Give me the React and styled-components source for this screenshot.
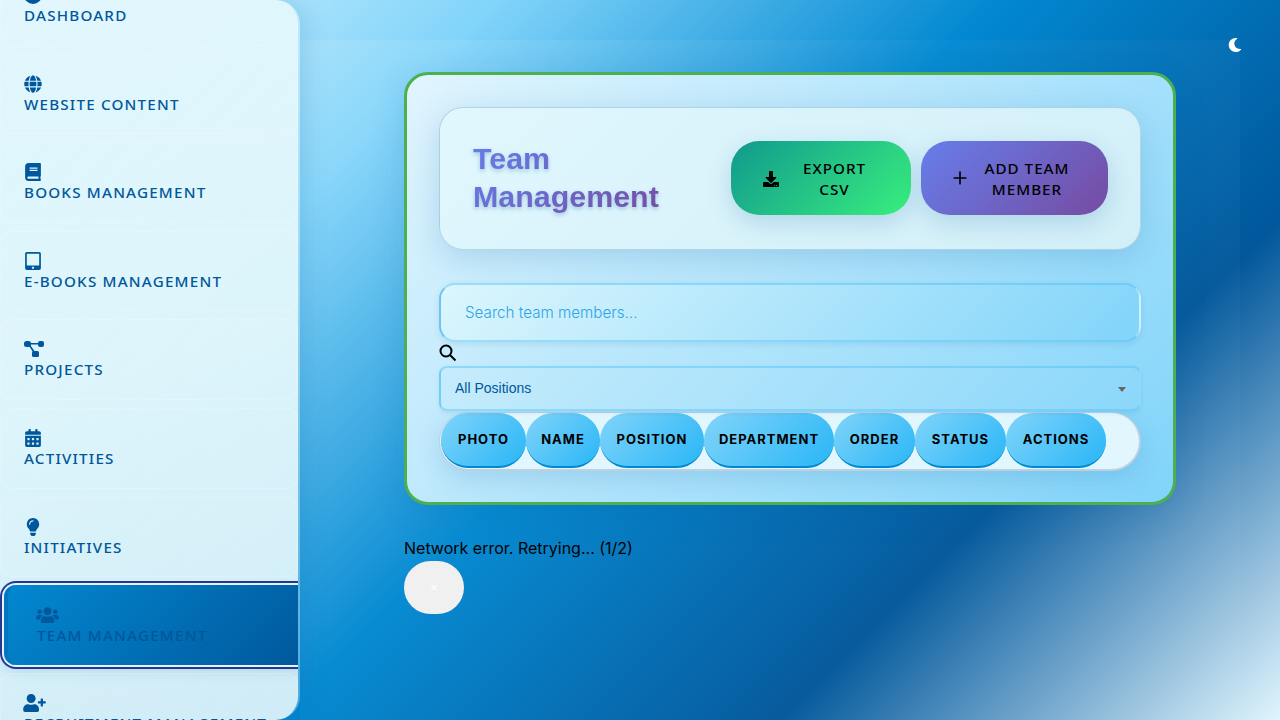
import styled, { createGlobalStyle } from "styled-components";
import {
	FaBook,
	FaCalendarAlt,
	FaDownload,
	FaGlobe,
	FaLightbulb,
	FaMoon,
	FaTabletAlt,
	FaUserPlus,
	FaUsers,
} from "react-icons/fa";
import { Plus } from "lucide-react";

const GlobalStyle = createGlobalStyle`
	html, body {
		margin: 0;
		height: 720px;
		overflow: hidden;
	}

	* {
		box-sizing: border-box;
	}

	body {
		font-family: "Liberation Sans", Arial, sans-serif;
		background: linear-gradient(135deg, #e1f5fe 0%, #81d4fa 25%, #0288d1 50%, #01579b 75%, #e1f5fe 100%);
	}
`;

const Layout = styled.div`
	position: relative;
	display: flex;
	height: 720px;
`;

const Sidebar = styled.aside`
	flex: 0 0 300px;
	height: 720px;
	overflow: hidden;
	background: linear-gradient(160deg, #e0f7fd 0%, #dcf5fb 50%, #cfecf7 100%);
	background-clip: padding-box;
	border-right: 2px solid rgba(255, 255, 255, 0.3);
	border-radius: 0 24px 24px 0;
	box-shadow: 4px 0 24px rgba(1, 87, 155, 0.18);
	position: relative;
	z-index: 1;
`;

/* list is scrolled a bit, first item sits partly above the fold */
const NavList = styled.nav`
	display: flex;
	flex-direction: column;
	gap: 8px;
	margin-top: -35px;
`;

const NavItem = styled.a`
	display: flex;
	flex-direction: column;
	align-items: flex-start;
	height: 80.6px;
	padding: 20px 23px 0;
	border: 1px solid rgba(255, 255, 255, 0.18);
	border-radius: 12px;
	background: linear-gradient(135deg, rgba(255, 255, 255, 0.06), rgba(255, 255, 255, 0.02));
	color: #01579b;
	font-family: "Noto Sans", sans-serif;
	font-size: 15.2px;
	font-weight: 500;
	letter-spacing: 1.2px;
	line-height: 22px;
	white-space: nowrap;
`;

const ActiveNavItem = styled(NavItem)`
	height: 79.4px;
	margin-left: 4px;
	margin-right: -12px;
	padding-top: 21px;
	padding-left: 29px;
	border: 0;
	border-left: 4px solid #0277bd;
	background: linear-gradient(135deg, #0288d1, #01579b);
	box-shadow: 0 0 0 2px #e1f5fe, 0 0 0 4px #283593, 0 6px 14px rgba(1, 87, 155, 0.15);
`;

const NavIconBox = styled.span`
	display: block;
	height: 18px;
	margin-left: ${(props) => (props.$wide ? "-1px" : "0")};

	svg {
		display: block;
		width: ${(props) => (props.$wide ? "23px" : "18px")};
		height: 18px;
	}
`;

const Main = styled.main`
	flex: 1;
	min-width: 0;
	padding: 40px 40px 0 0;
`;

const Surface = styled.div`
	height: 680px;
	padding: 32px 64px 0 104px;
	background: linear-gradient(135deg, rgba(255, 255, 255, 0.09), rgba(255, 255, 255, 0.025) 40%, rgba(255, 255, 255, 0.025));
`;

const Card = styled.section`
	width: 772px;
	height: 433px;
	padding: 32px;
	border: 3px solid #4caf50;
	border-radius: 24px;
	background: linear-gradient(135deg, #e1f5fe 0%, #81d4fa 100%);
	box-shadow: 0 8px 32px rgba(1, 87, 155, 0.15);
`;

const PageHeader = styled.header`
	display: flex;
	align-items: center;
	justify-content: space-between;
	height: 143px;
	padding: 0 32px 2px 33px;
	margin-bottom: 33px;
	border: 1px solid rgba(1, 87, 155, 0.2);
	border-radius: 24px;
	background: linear-gradient(135deg, #e0f7fd, #d2eff8);
	box-shadow: 0 8px 32px rgba(1, 87, 155, 0.18);
`;

const Title = styled.h1`
	margin: -2px 0 0;
	width: 200px;
	font-family: "Liberation Sans", Arial, sans-serif;
	font-size: 30.4px;
	font-weight: 700;
	line-height: 38px;
	background: linear-gradient(135deg, #667eea, #764ba2);
	-webkit-background-clip: text;
	background-clip: text;
	color: transparent;
	filter: drop-shadow(0 2px 2px rgba(1, 87, 155, 0.3));
`;

const Actions = styled.div`
	display: flex;
	gap: 10px;
`;

const ActionButton = styled.button`
	display: flex;
	align-items: center;
	gap: 11px;
	width: ${(props) => props.$width}px;
	height: 74px;
	padding: 2px 32px 0;
	border: 0;
	border-radius: 28px;
	background: ${(props) => props.$bg};
	box-shadow: 0 8px 24px rgba(1, 87, 155, 0.18);
	color: #000;
	font-family: "Noto Sans", sans-serif;
	font-size: 15.2px;
	font-weight: 500;
	letter-spacing: 1px;
	line-height: 21px;
	text-align: center;

	svg {
		flex: none;
	}
`;

const ButtonLabel = styled.span`
	flex: 1;
`;

const PlusIcon = styled(Plus)`
	margin: -2px -3px 0;
`;

const SearchInput = styled.input`
	display: block;
	width: 702px;
	height: 59px;
	padding: 0 24px;
	border: 2px solid rgba(79, 195, 247, 0.45);
	border-left-color: #6cc5f2;
	border-right-color: rgba(200, 235, 250, 0.4);
	border-radius: 16px;
	outline: 0;
	background: linear-gradient(135deg, #dcf6fd 0%, #81d4fa 100%);
	box-shadow: 0 2px 6px rgba(1, 87, 155, 0.12);
	font-family: Inter, sans-serif;
	font-size: 15.2px;
	font-weight: 300;
	color: #01579b;

	&::placeholder {
		color: #2ba4ea;
		opacity: 1;
	}
`;

const SearchIcon = styled.svg`
	display: block;
	width: 18px;
	height: 18px;
	margin: 2px 0 4px;
`;

const SelectWrap = styled.div`
	position: relative;
	width: 702px;

	&::after {
		content: "";
		position: absolute;
		top: 21px;
		right: 15px;
		border-style: solid;
		border-width: 5px 4px 0;
		border-color: #666 transparent transparent;
	}
`;

const PositionSelect = styled.select`
	display: block;
	width: 702px;
	height: 45px;
	padding: 0 14px 2px;
	border: 2px solid rgba(79, 195, 247, 0.45);
	border-radius: 8px;
	outline: 0;
	appearance: none;
	background: linear-gradient(135deg, #c6ecfc 0%, #8bd7fa 100%);
	box-shadow: 0 2px 4px rgba(1, 87, 155, 0.1);
	font-family: "Liberation Sans", Arial, sans-serif;
	font-size: 14px;
	color: #01579b;
`;

const TableHead = styled.div`
	display: flex;
	width: 702px;
	height: 59px;
	margin-top: 1px;
	padding: 1px 0 0 1px;
	border: 2px solid rgba(190, 205, 225, 0.95);
	border-left-width: 1px;
	border-top-width: 1px;
	border-radius: 30px;
	background: #e1f7fd;
	box-shadow: 0 8px 24px rgba(1, 87, 155, 0.15);
`;

const HeadCell = styled.div`
	display: flex;
	align-items: center;
	justify-content: center;
	flex: 0 0 ${(props) => props.$width}px;
	height: 55px;
	margin-top: -1px;
	padding-bottom: 2px;
	border-bottom: 2px solid #0288d1;
	border-radius: 27px;
	background: linear-gradient(135deg, #81d4fa, #29b6f6);
	color: #000;
	font-family: Inter, sans-serif;
	font-size: 13px;
	font-weight: 700;
	letter-spacing: 1px;
`;

const ErrorBlock = styled.div`
	margin-top: 31px;
`;

const ErrorText = styled.p`
	margin: 0 0 1px;
	color: #000;
	font-family: Inter, sans-serif;
	font-size: 16px;
	line-height: 24px;
`;

const DismissButton = styled.button`
	display: block;
	width: 60px;
	height: 53px;
	padding: 0;
	border: 0;
	border-radius: 27px;
	background: #f0f0f0;
	color: #fff;
	font-family: "Liberation Sans", Arial, sans-serif;
	font-size: 13px;
	line-height: 53px;
`;

const ThemeToggle = styled.button`
	position: absolute;
	top: 38px;
	right: 38px;
	display: flex;
	padding: 0;
	border: 0;
	background: none;
	color: #fff;
	font-size: 14px;
`;

function DashboardIcon() {
	return (
		<svg viewBox="0 0 18 18" fill="#01579b">
			<circle cx="9" cy="9" r="9" />
		</svg>
	);
}

function ProjectsIcon() {
	return (
		<svg viewBox="0 0 23 18" fill="#01579b">
			<rect x="1" y="1" width="7" height="6" rx="2.5" />
			<rect x="15" y="1" width="6" height="6" rx="2" />
			<rect x="9" y="11" width="7" height="6" rx="1.5" />
			<path d="M7 3h9v1.6H7zM6 6l1.2-1 5 7-1.6 1z" />
		</svg>
	);
}

const navItems = [
	{ label: "DASHBOARD", icon: DashboardIcon },
	{ label: "WEBSITE CONTENT", icon: FaGlobe },
	{ label: "BOOKS MANAGEMENT", icon: FaBook },
	{ label: "E-BOOKS MANAGEMENT", icon: FaTabletAlt },
	{ label: "PROJECTS", icon: ProjectsIcon, wide: true },
	{ label: "ACTIVITIES", icon: FaCalendarAlt },
	{ label: "INITIATIVES", icon: FaLightbulb },
	{ label: "TEAM MANAGEMENT", icon: FaUsers, wide: true, active: true },
	{ label: "RECRUITMENT MANAGEMENT", icon: FaUserPlus, wide: true },
];

const columns = [
	{ label: "PHOTO", width: 85 },
	{ label: "NAME", width: 74 },
	{ label: "POSITION", width: 104 },
	{ label: "DEPARTMENT", width: 130 },
	{ label: "ORDER", width: 81 },
	{ label: "STATUS", width: 91 },
	{ label: "ACTIONS", width: 100 },
];

function App() {
	return (
		<Layout>
			<GlobalStyle />
			<Sidebar>
				<NavList>
					{navItems.map(({ label, icon: Icon, wide, active }) => {
						const Item = active ? ActiveNavItem : NavItem;
						return (
							<Item key={label}>
								<NavIconBox $wide={wide}>
									<Icon />
								</NavIconBox>
								{label}
							</Item>
						);
					})}
				</NavList>
			</Sidebar>

			<Main>
				<Surface>
					<Card>
						<PageHeader>
							<Title>Team Management</Title>
							<Actions>
								<ActionButton $width={180} $bg="linear-gradient(135deg, #11998e, #38ef7d)">
									<FaDownload size={16} />
									<ButtonLabel>
										EXPORT
										<br />
										CSV
									</ButtonLabel>
								</ActionButton>
								<ActionButton $width={187} $bg="linear-gradient(135deg, #667eea, #764ba2)">
									<PlusIcon size={20} strokeWidth={2} />
									<ButtonLabel>
										ADD TEAM
										<br />
										MEMBER
									</ButtonLabel>
								</ActionButton>
							</Actions>
						</PageHeader>

						<SearchInput placeholder="Search team members..." />
						<SearchIcon viewBox="0 0 18 18" fill="none" stroke="#000" strokeWidth="2">
							<circle cx="7" cy="7" r="5.5" />
							<line x1="11" y1="11" x2="16.5" y2="16.5" />
						</SearchIcon>
						<SelectWrap>
							<PositionSelect defaultValue="all">
								<option value="all">All Positions</option>
							</PositionSelect>
						</SelectWrap>

						<TableHead>
							{columns.map((col) => (
								<HeadCell key={col.label} $width={col.width}>
									{col.label}
								</HeadCell>
							))}
						</TableHead>
					</Card>

					<ErrorBlock>
						<ErrorText>Network error. Retrying... (1/2)</ErrorText>
						<DismissButton>×</DismissButton>
					</ErrorBlock>
				</Surface>
			</Main>

			<ThemeToggle aria-label="Toggle theme">
				<FaMoon />
			</ThemeToggle>
		</Layout>
	);
}

export default App;
